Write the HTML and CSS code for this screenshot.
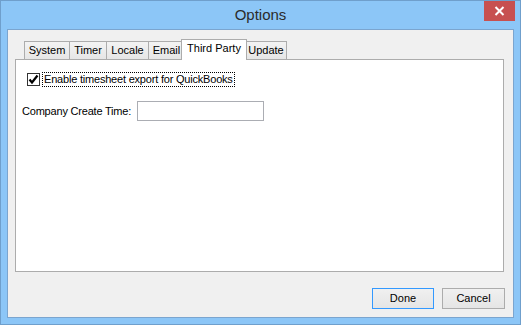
FILE: index.html
```html
<!doctype html>
<html lang="en">
<head>
	<title>Options</title>
	<meta charset="UTF-8">
	<link rel="stylesheet" href="styles.css">
</head>
<body>

<div class="window">

	<div class="titlebar">
		<span class="title">Options</span>
		<span class="close-btn">
			<svg width="11" height="10" viewBox="0 0 11 10">
				<path d="M1.5 1 L9.5 9 M9.5 1 L1.5 9" stroke="#ffffff" stroke-width="2" fill="none"/>
			</svg>
		</span>
	</div>

	<div class="client">

		<div class="tabs">
			<div class="tab tab-system">System</div>
			<div class="tab tab-timer">Timer</div>
			<div class="tab tab-locale">Locale</div>
			<div class="tab tab-email">Email</div>
			<div class="tab tab-third selected">Third Party</div>
			<div class="tab tab-update">Update</div>
		</div>

		<div class="tab-panel">
			<div class="check-row">
				<span class="checkbox">
					<svg width="11" height="11" viewBox="0 0 11 11">
						<path d="M1.5 5.5 L4 8.5 L9.5 1.5" stroke="#000000" stroke-width="2.2" fill="none"/>
					</svg>
				</span>
				<span class="check-label">Enable timesheet export for QuickBooks</span>
			</div>
			<div class="field-row">
				<span class="field-label">Company Create Time:</span>
				<span class="textbox"></span>
			</div>
		</div>

		<div class="buttons">
			<span class="btn default">Done</span>
			<span class="btn">Cancel</span>
		</div>

	</div>

</div>

</body>
</html>
```

FILE: styles.css
```css
html, body { margin: 0; padding: 0; }
body { font-family: "Liberation Sans", Arial, sans-serif; font-size: 11px; color: #000000; }

.window { width: 519px; height: 323px; border: 1px solid #6f9fcc; background-color: #8cc6f7; display: flex; flex-direction: column; }

.titlebar { height: 28px; display: flex; justify-content: center; position: relative; }
.titlebar .title { font-size: 15px; color: #2b2b2b; margin-top: 5px; }
.close-btn { position: absolute; top: 0; right: 5px; width: 31px; height: 20px; background-color: #c75050; display: flex; align-items: center; justify-content: center; }

.client { margin: 0 6px 6px 6px; flex: 1; border: 1px solid #7ba5cf; background-color: #f0f0f0; display: flex; flex-direction: column; }

.tabs { display: flex; align-items: flex-end; margin: 9px 0 0 16px; height: 20px; }
.tab { height: 17px; line-height: 17px; border: 1px solid #acacac; border-bottom: none; background: linear-gradient(#f3f3f3, #e6e6e6); text-align: center; box-sizing: content-box; margin-right: -1px; }
.tab-system { width: 44px; }
.tab-timer { width: 36px; }
.tab-locale { width: 41px; }
.tab-email { width: 35px; }
.tab-third { width: 64px; }
.tab-update { width: 40px; }
.tab.selected { height: 20px; line-height: 16px; background: #ffffff; margin: 0 -1px -1px -3px; position: relative; z-index: 1; }
.tab.selected + .tab { margin-left: -1px; }

.tab-panel { margin: 0 9px 0 7px; height: 211px; border: 1px solid #acacac; background-color: #ffffff; }

.check-row { display: flex; align-items: center; margin: 12px 0 0 11px; }
.checkbox { width: 11px; height: 11px; border: 1px solid #333333; background-color: #ffffff; display: flex; }
.check-label { margin-left: 2px; padding: 0 1px; line-height: 13px; border: 1px dotted #000000; letter-spacing: -0.2px; }

.field-row { display: flex; align-items: center; margin: 14px 0 0 6px; }
.field-label { width: 115px; letter-spacing: -0.2px; }
.textbox { width: 125px; height: 18px; border: 1px solid #abadb3; background-color: #ffffff; }

.buttons { display: flex; justify-content: flex-end; gap: 8px; margin: 16px 8px 0 0; }
.btn { width: 60px; height: 19px; line-height: 19px; text-align: center; border: 1px solid #acacac; background: linear-gradient(#f0f0f0, #e5e5e5); }
.btn.default { border-color: #3399ff; }
.btn + .btn { width: 61px; }
```
